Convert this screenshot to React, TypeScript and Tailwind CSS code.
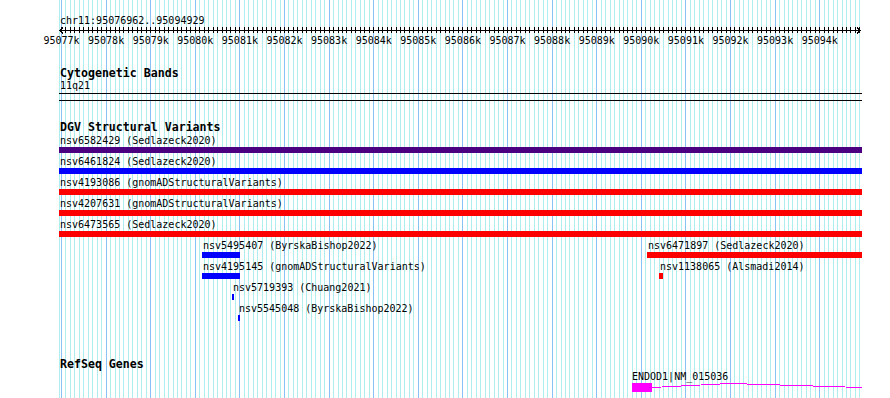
const X0 = 59; // left edge of the track canvas
const TRACK_W = 803;
const MINOR = 4.46; // px per 100 bp
const FIRST = 61; // 95077000 lands here

const gridLines = Array.from({ length: 180 }, (_, i) => ({
  x: Math.round(FIRST + i * MINOR) + 0.5,
  major: i % 10 === 0,
}));

const majors = Array.from({ length: 18 }, (_, i) => ({
  label: `${95077 + i}k`,
  x: FIRST + i * MINOR * 10,
}));

type Feature = { label: string; left: number; right: number; color: string };

// x positions are page pixels, as drawn by the browser's scale
const dgvRows: Feature[][] = [
  [{ label: 'nsv6582429 (Sedlazeck2020)', left: 59, right: 862, color: '#4b0082' }],
  [{ label: 'nsv6461824 (Sedlazeck2020)', left: 59, right: 862, color: '#0000ff' }],
  [{ label: 'nsv4193086 (gnomADStructuralVariants)', left: 59, right: 862, color: '#ff0000' }],
  [{ label: 'nsv4207631 (gnomADStructuralVariants)', left: 59, right: 862, color: '#ff0000' }],
  [{ label: 'nsv6473565 (Sedlazeck2020)', left: 59, right: 862, color: '#ff0000' }],
  [
    { label: 'nsv5495407 (ByrskaBishop2022)', left: 202, right: 240, color: '#0000ff' },
    { label: 'nsv6471897 (Sedlazeck2020)', left: 647, right: 862, color: '#ff0000' },
  ],
  [
    { label: 'nsv4195145 (gnomADStructuralVariants)', left: 202, right: 240, color: '#0000ff' },
    { label: 'nsv1138065 (Alsmadi2014)', left: 659, right: 663, color: '#ff0000' },
  ],
  [{ label: 'nsv5719393 (Chuang2021)', left: 232, right: 234, color: '#0000ff' }],
  [{ label: 'nsv5545048 (ByrskaBishop2022)', left: 238, right: 240, color: '#0000ff' }],
];

function TrackTitle({ children }: { children: string }) {
  return <div className="ml-px text-[11.6px] leading-[11px] font-bold text-black">{children}</div>;
}

function Ruler() {
  return (
    <div className="pt-[15px]">
      <div className="ml-px text-[10px] leading-[11px]">chr11:95076962..95094929</div>
      <svg width={TRACK_W} height={8} className="block" shapeRendering="crispEdges">
        <line x1={0} y1={4.5} x2={801} y2={4.5} stroke="#000" />
        {gridLines.map((g) => (
          <line key={g.x} x1={g.x - X0} y1={1} x2={g.x - X0} y2={7} stroke="#000" />
        ))}
        <polyline points="4,1.5 1,4.5 4,7.5" fill="none" stroke="#000" />
        <polyline points="798,1.5 801,4.5 798,7.5" fill="none" stroke="#000" />
      </svg>
      <div className="relative h-[13px]">
        {majors.map((m) => (
          <span
            key={m.label}
            className="absolute top-0 -translate-x-1/2 text-[10px] leading-[13px] whitespace-nowrap"
            style={{ left: m.x - X0 + 0.5 }}
          >
            {m.label}
          </span>
        ))}
      </div>
    </div>
  );
}

function CytoBands() {
  return (
    <div className="mt-[21px]">
      <TrackTitle>Cytogenetic Bands</TrackTitle>
      <div className="ml-px text-[10px] leading-[13px]">11q21</div>
      <div className="mt-px h-[8px] w-[803px] border-y border-black" />
    </div>
  );
}

function DgvTrack() {
  return (
    <div className="mt-[21px]">
      <TrackTitle>DGV Structural Variants</TrackTitle>
      <div className="mt-px flex flex-col">
        {dgvRows.map((row, i) => (
          <div key={i} className="relative h-[21px] w-[803px]">
            {row.map((f) => (
              <div key={f.label} className="absolute top-0" style={{ left: f.left - X0 }}>
                <div className="ml-px text-[10px] leading-[13px] whitespace-nowrap">{f.label}</div>
                <div className="h-[6px]" style={{ width: f.right - f.left, backgroundColor: f.color }} />
              </div>
            ))}
          </div>
        ))}
      </div>
    </div>
  );
}

function RefSeqTrack() {
  return (
    <div className="mt-[36px]">
      <TrackTitle>RefSeq Genes</TrackTitle>
      <div className="relative h-[24px] w-[803px]">
        <div className="absolute top-0" style={{ left: 632 - X0 }}>
          <div className="text-[10px] leading-[13px] whitespace-nowrap">ENDOD1|NM_015036</div>
          <svg width={231} height={10} className="block" shapeRendering="crispEdges">
            <rect x={0} y={0} width={20} height={9} fill="#ff00ff" />
            <polyline points="20,4.5 98,0.5 230,4.5" fill="none" stroke="#ff00ff" />
          </svg>
        </div>
      </div>
    </div>
  );
}

export default function App() {
  return (
    <div className="relative h-[398px] w-[890px] overflow-hidden bg-white font-['DejaVu_Sans_Mono',monospace] text-black">
      <svg width={890} height={398} className="absolute inset-0" shapeRendering="crispEdges">
        <line x1={59.5} y1={0} x2={59.5} y2={398} stroke="#afeeee" />
        {gridLines.map((g) => (
          <line key={g.x} x1={g.x} y1={0} x2={g.x} y2={398} stroke={g.major ? '#87c4f5' : '#afeeee'} />
        ))}
      </svg>

      <div className="relative flex flex-col pl-[59px]">
        <Ruler />
        <CytoBands />
        <DgvTrack />
        <RefSeqTrack />
      </div>
    </div>
  );
}
